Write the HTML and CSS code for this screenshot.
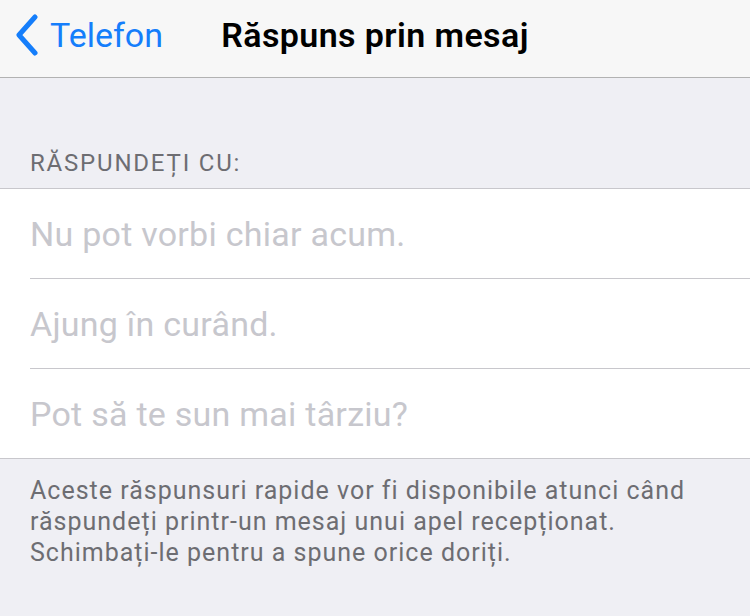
FILE: index.html
```html
<!DOCTYPE html>
<html lang="ro">
<head>
    <meta charset="UTF-8">
    <meta name="viewport" content="width=device-width, initial-scale=1.0">
    <title>Răspuns prin mesaj</title>
    <link rel="stylesheet" href="styles.css">
</head>
<body>

<div class="navbar">
    <a class="back" href="#">
        <svg class="chevron" width="26" height="42" viewBox="0 0 26 42">
            <path d="M21 3 L5 21 L21 39" fill="none" stroke="#157efb" stroke-width="5" stroke-linecap="round" stroke-linejoin="round"/>
        </svg>
        <span>Telefon</span>
    </a>
    <h1 class="title">Răspuns prin mesaj</h1>
</div>

<div class="section-header">RĂSPUNDEȚI CU:</div>

<ul class="list">
    <li class="row">Nu pot vorbi chiar acum.</li>
    <li class="row">Ajung în curând.</li>
    <li class="row">Pot să te sun mai târziu?</li>
</ul>

<p class="footer">Aceste răspunsuri rapide vor fi disponibile atunci când<br>răspundeți printr-un mesaj unui apel recepționat.<br>Schimbați-le pentru a spune orice doriți.</p>

</body>
</html>
```

FILE: styles.css
```css
body {
    margin: 0;
    background-color: #efeff4;
    font-family: Roboto, "Liberation Sans", sans-serif;
}
.navbar {
    height: 69px;
    padding-bottom: 8px;
    background-color: #f7f7f7;
    border-bottom: 1px solid #b2b2b2;
    display: flex;
    align-items: center;
    position: relative;
}
.back {
    display: flex;
    align-items: center;
    gap: 10px;
    padding-left: 14px;
    color: #157efb;
    text-decoration: none;
    font-size: 34px;
}
.title {
    position: absolute;
    left: 0;
    right: 0;
    top: 0;
    bottom: 8px;
    display: flex;
    align-items: center;
    justify-content: center;
    margin: 0;
    font-size: 34px;
    font-weight: 600;
    letter-spacing: 0.4px;
    color: #000;
    pointer-events: none;
}
.section-header {
    padding: 72px 30px 12px;
    font-size: 24px;
    letter-spacing: 1.8px;
    color: #6d6d72;
    line-height: 26px;
}
.list {
    list-style: none;
    margin: 0;
    padding: 0 0 0 30px;
    background-color: #fff;
    border-top: 1px solid #c8c7cc;
    border-bottom: 1px solid #c8c7cc;
}
.row {
    height: 89px;
    display: flex;
    align-items: center;
    font-size: 34px;
    letter-spacing: 0.25px;
    color: #c7c7cd;
    border-bottom: 1px solid #c8c7cc;
}
.row:last-child {
    border-bottom: none;
}
.footer {
    margin: 0;
    padding: 16px 30px;
    font-size: 25px;
    letter-spacing: 1px;
    line-height: 31px;
    color: #6d6d72;
}
```
